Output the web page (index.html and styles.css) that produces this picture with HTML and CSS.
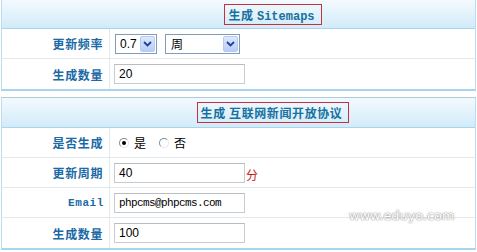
FILE: index.html
```html
<!DOCTYPE html>
<html>
	<head>
		<title>Sitemaps</title>
		<link rel="stylesheet" href="styles.css">
	</head>
	<body>
		<div class="panel">
			<div class="head"><span class="title">生成 <span class="latin">Sitemaps</span></span></div>
			<div class="row">
				<div class="label">更新频率</div>
				<div class="field">
					<div class="select small"><span>0.7</span><i class="drop"><svg width="9" height="6" viewBox="0 0 9 6"><path d="M1 1 L4.5 4.5 L8 1" fill="none" stroke="#23418f" stroke-width="1.8"/></svg></i></div>
					<div class="select wide"><span>周</span><i class="drop"><svg width="9" height="6" viewBox="0 0 9 6"><path d="M1 1 L4.5 4.5 L8 1" fill="none" stroke="#23418f" stroke-width="1.8"/></svg></i></div>
				</div>
			</div>
			<div class="row last">
				<div class="label">生成数量</div>
				<div class="field"><div class="input">20</div></div>
			</div>
		</div>

		<div class="panel">
			<div class="head"><span class="title">生成 互联网新闻开放协议</span></div>
			<div class="row">
				<div class="label">是否生成</div>
				<div class="field">
					<span class="radio checked"></span><span class="opt">是</span>
					<span class="radio"></span><span class="opt">否</span>
				</div>
			</div>
			<div class="row">
				<div class="label">更新周期</div>
				<div class="field"><div class="input">40</div><span class="unit">分</span></div>
			</div>
			<div class="row">
				<div class="label latin">Email</div>
				<div class="field"><div class="input mono">phpcms@phpcms.com</div></div>
			</div>
			<div class="row last">
				<div class="label">生成数量</div>
				<div class="field"><div class="input">100</div></div>
			</div>
		</div>

		<div class="mark">www.eduyo.com</div>
	</body>
</html>
```

FILE: styles.css
```css
body {
	margin: 0;
	font-family: "Noto Sans CJK SC", sans-serif;
	font-size: 12px;
	background-color: #fff;
	color: #000;
}
.panel {
	margin: 0 1px;
	border-left: 1px solid #bcdcf0;
	border-right: 1px solid #bcdcf0;
	border-bottom: 2px solid #a9d4ef;
}
.panel + .panel {
	margin-top: 6px;
	border-top: 1px solid #aec9d8;
}
.head {
	height: 28px;
	border-bottom: 1px solid #a9d4ee;
	background: linear-gradient(#f4fafe, #e4f3fc 45%, #d2ebf9);
	display: flex;
	align-items: center;
	justify-content: center;
	padding-left: 69px;
}
.panel + .panel .head {
	height: 29px;
}
.title {
	border: 1px solid #c0323d;
	height: 19px;
	line-height: 19px;
	padding: 0 6px 0 3px;
	color: #16719f;
	font-weight: bold;
	letter-spacing: 0.6px;
	white-space: pre;
}
.latin {
	font-family: "Liberation Mono", monospace;
	letter-spacing: 0;
}
.title .latin {
	font-size: 12px;
}
.row {
	display: grid;
	grid-template-columns: 108px 1fr;
	height: 29px;
	border-bottom: 1px solid #e2e8ec;
}
.row.last {
	height: 30px;
	border-bottom: none;
}
.label {
	display: flex;
	align-items: center;
	justify-content: flex-end;
	padding-right: 6px;
	border-right: 1px solid #e2e8ec;
	color: #1b6aa6;
	font-weight: bold;
	letter-spacing: 0.6px;
}
.label.latin {
	font-size: 11px;
	padding-right: 5px;
}
.field {
	display: flex;
	align-items: center;
	padding-left: 4px;
}
.select {
	box-sizing: border-box;
	height: 20px;
	border: 1px solid #7f9db9;
	background-color: #fff;
	display: flex;
	align-items: center;
	justify-content: space-between;
	padding: 1px;
	margin-right: 8px;
	font-family: "Liberation Sans", sans-serif;
	font-size: 12px;
}
.select span {
	padding-left: 3px;
}
.small {
	width: 42px;
	margin-left: 1px;
}
.wide {
	width: 75px;
	margin-right: 0;
}
.wide span {
	font-family: "Noto Sans CJK SC", sans-serif;
	padding-left: 4px;
}
.drop {
	box-sizing: border-box;
	width: 15px;
	height: 16px;
	border: 1px solid #b7caf4;
	border-radius: 2px;
	background: linear-gradient(#dde7fd, #b9cdf8);
	display: flex;
	align-items: center;
	justify-content: center;
}
.input {
	box-sizing: border-box;
	width: 131px;
	height: 20px;
	border: 1px solid #c6ccd0;
	border-top-color: #b7bdc2;
	padding-left: 4px;
	line-height: 18px;
	font-family: "Liberation Sans", sans-serif;
	font-size: 12px;
}
.input.mono {
	font-family: "Liberation Mono", monospace;
	font-size: 11px;
	letter-spacing: -0.6px;
}
.unit {
	color: #c41a1a;
	margin-left: 1px;
	margin-top: 4px;
}
.radio {
	box-sizing: border-box;
	width: 10px;
	height: 10px;
	border-radius: 50%;
	border: 1px solid #8b8b8b;
	border-right-color: #e6e6e6;
	border-bottom-color: #e6e6e6;
	margin-left: 11px;
	display: flex;
	align-items: center;
	justify-content: center;
}
.radio:first-child {
	margin-left: 5px;
}
.radio.checked::after {
	content: "";
	width: 4px;
	height: 4px;
	border-radius: 50%;
	background-color: #000;
}
.opt {
	margin-left: 5px;
	width: 14px;
}
.mark {
	position: absolute;
	left: 349px;
	top: 208px;
	font-family: "DejaVu Sans", sans-serif;
	font-size: 13px;
	color: #fff;
	letter-spacing: -0.1px;
	text-shadow: 0 0 2px #8a8a8a, 0 0 1px #9a9a9a;
}
```
